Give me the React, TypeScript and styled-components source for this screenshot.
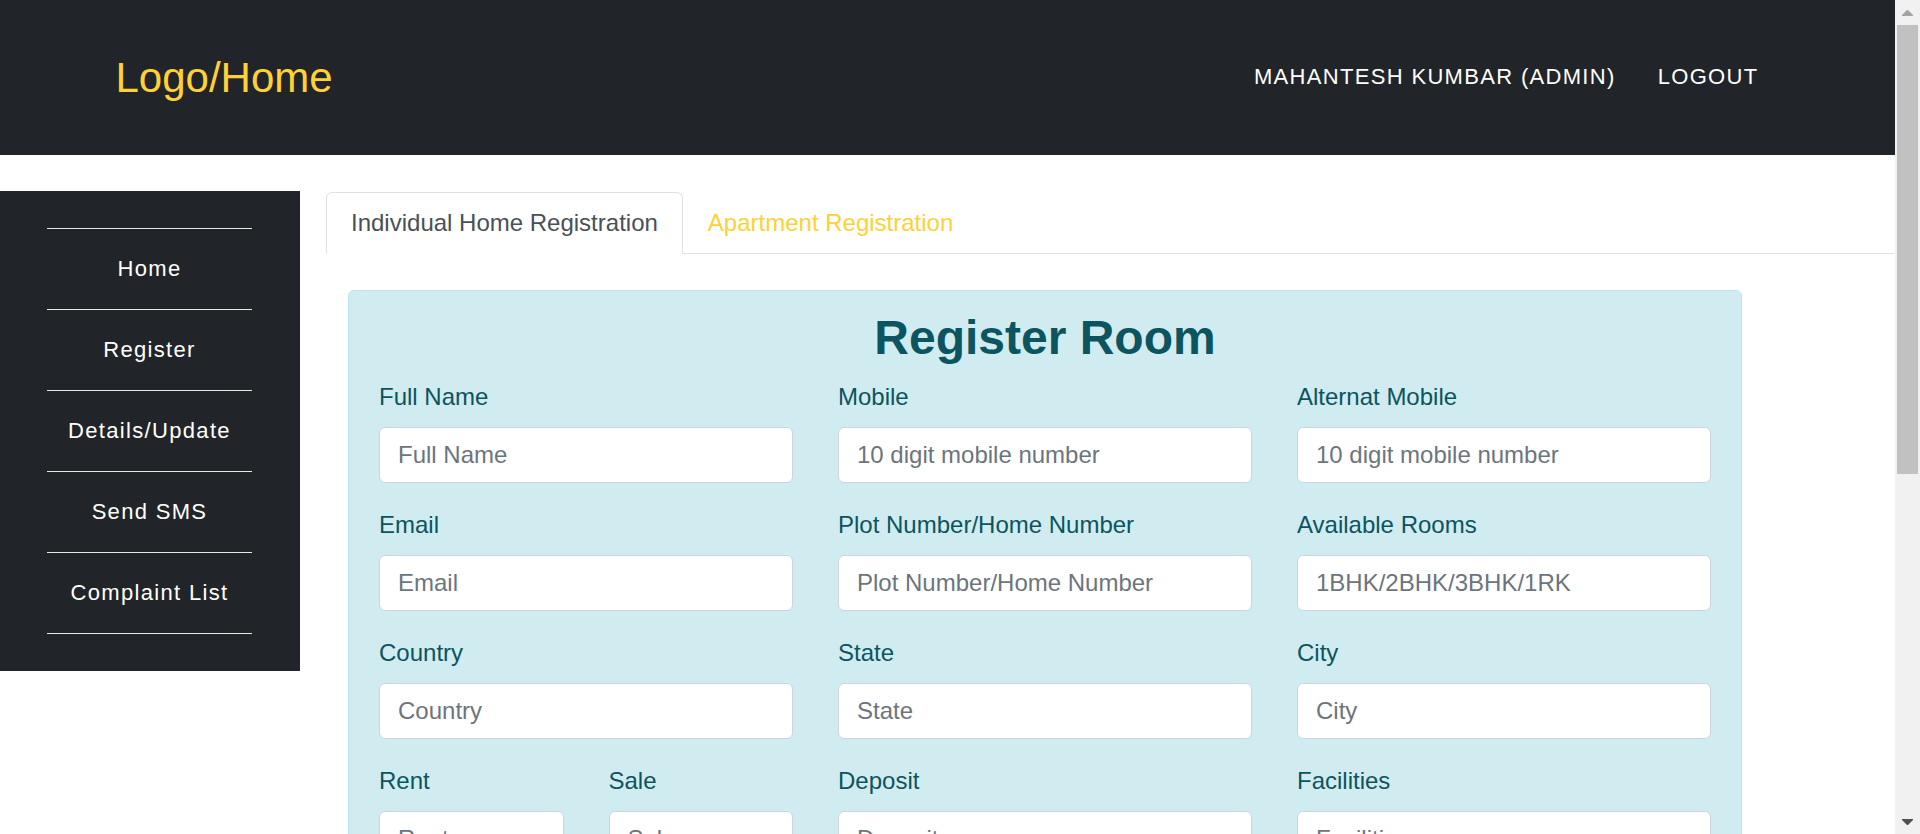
import React from "react";
import styled, { createGlobalStyle, css } from "styled-components";

const GlobalStyle = createGlobalStyle`
  *, *::before, *::after { box-sizing: border-box; }
  body {
    margin: 0;
    background: #fff;
    color: #212529;
    font-family: "Liberation Sans", Arial, sans-serif;
    font-size: 24px;
    line-height: 36px;
  }
`;

const Viewport = styled.div`
  display: flex;
  height: 100vh;
  overflow: hidden;
`;

const Page = styled.div`
  flex: 1;
  min-width: 0;
  overflow: hidden;
`;

const Header = styled.header`
  background: #212529;
`;

const HeaderInner = styled.div`
  display: flex;
  align-items: center;
  justify-content: space-between;
  max-width: 1710px;
  min-height: 155px;
  margin: 0 auto;
  padding: 0 23px;
`;

const Brand = styled.a`
  color: #fed136;
  font-size: 42px;
  line-height: 64px;
  text-decoration: none;
`;

const HeaderNav = styled.nav`
  display: flex;
  padding-bottom: 2px;
`;

const navText = css`
  color: #fff;
  font-size: 22px;
  letter-spacing: 0.06em;
  text-decoration: none;
`;

const HeaderLink = styled.a`
  ${navText}
  padding: 0 21px;
  text-transform: uppercase;
`;

const Content = styled.div`
  display: flex;
  align-items: flex-start;
  padding-top: 36px;
`;

const Sidebar = styled.nav`
  flex: 0 0 300px;
  padding: 37px 48px 37px 47px;
  background: #212529;
`;

const SideList = styled.ul`
  margin: 0;
  padding: 0;
  list-style: none;
  border-top: 1px solid #e9e9e5;
`;

const SideItem = styled.li`
  border-bottom: 1px solid #e9e9e5;
`;

const SideLink = styled.a`
  ${navText}
  display: block;
  padding: 22px 0;
  text-align: center;
  white-space: nowrap;
`;

const Main = styled.main`
  flex: 1;
  min-width: 0;
  padding: 1px 0 0 26px;
`;

const Tabs = styled.div`
  display: flex;
  border-bottom: 1px solid #dee2e6;
`;

const Tab = styled.button<{ $active?: boolean }>`
  margin: 0 0 -1px;
  padding: 12px 24px;
  border: 1px solid transparent;
  border-radius: 6px 6px 0 0;
  background: transparent;
  color: #fed136;
  font: inherit;
  cursor: pointer;
  ${({ $active }) =>
    $active &&
    css`
      border-color: #dee2e6 #dee2e6 #fff;
      background: #fff;
      color: #495057;
    `}
`;

const Panel = styled.form`
  margin: 36px 153px 36px 22px;
  padding: 18px 30px;
  border: 1px solid #bee5eb;
  border-radius: 6px;
  background: #d1ecf1;
  color: #0c5460;
`;

const Title = styled.h1`
  margin: 0 0 12px;
  font-size: 48px;
  font-weight: 700;
  line-height: 58px;
  text-align: center;
`;

const Fields = styled.div`
  display: grid;
  grid-template-columns: repeat(6, minmax(0, 1fr));
  gap: 24px 45px;
`;

const Field = styled.div<{ $half?: boolean }>`
  grid-column: span ${({ $half }) => ($half ? 1 : 2)};
`;

const Label = styled.label`
  display: block;
  width: fit-content;
  margin-bottom: 12px;
`;

const Input = styled.input`
  display: block;
  width: 100%;
  height: 56px;
  padding: 9px 18px;
  border: 1px solid #ced4da;
  border-radius: 6px;
  background: #fff;
  color: #495057;
  font: inherit;
  &::placeholder {
    color: #6c757d;
    opacity: 1;
  }
`;

const Scrollbar = styled.div`
  display: flex;
  flex: 0 0 25px;
  flex-direction: column;
  background: #f1f1f1;
`;

const ScrollArrow = styled.div`
  display: flex;
  flex: 0 0 25px;
  align-items: center;
  justify-content: center;
`;

const ScrollTrack = styled.div`
  flex: 1;
  padding: 0 2px;
`;

const ScrollThumb = styled.div`
  height: 57.3%;
  background: #c1c1c1;
`;

const sideLinks = ["Home", "Register", "Details/Update", "Send SMS", "Complaint List"];

type FieldSpec = { id: string; label: string; placeholder?: string; type?: string; half?: boolean };

const fields: FieldSpec[] = [
  { id: "fullName", label: "Full Name" },
  { id: "mobile", label: "Mobile", placeholder: "10 digit mobile number", type: "tel" },
  { id: "altMobile", label: "Alternat Mobile", placeholder: "10 digit mobile number", type: "tel" },
  { id: "email", label: "Email", type: "email" },
  { id: "plot", label: "Plot Number/Home Number" },
  { id: "rooms", label: "Available Rooms", placeholder: "1BHK/2BHK/3BHK/1RK" },
  { id: "country", label: "Country" },
  { id: "state", label: "State" },
  { id: "city", label: "City" },
  { id: "rent", label: "Rent", half: true },
  { id: "sale", label: "Sale", half: true },
  { id: "deposit", label: "Deposit" },
  { id: "facilities", label: "Facilities" },
];

export default function App() {
  return (
    <>
      <GlobalStyle />
      <Viewport>
        <Page>
          <Header>
            <HeaderInner>
              <Brand href="#">Logo/Home</Brand>
              <HeaderNav>
                <HeaderLink href="#">Mahantesh Kumbar (Admin)</HeaderLink>
                <HeaderLink href="#">Logout</HeaderLink>
              </HeaderNav>
            </HeaderInner>
          </Header>
          <Content>
            <Sidebar>
              <SideList>
                {sideLinks.map((text) => (
                  <SideItem key={text}>
                    <SideLink href="#">{text}</SideLink>
                  </SideItem>
                ))}
              </SideList>
            </Sidebar>
            <Main>
              <Tabs role="tablist">
                <Tab type="button" role="tab" aria-selected="true" $active>
                  Individual Home Registration
                </Tab>
                <Tab type="button" role="tab" aria-selected="false">
                  Apartment Registration
                </Tab>
              </Tabs>
              <Panel>
                <Title>Register Room</Title>
                <Fields>
                  {fields.map((f) => (
                    <Field key={f.id} $half={f.half}>
                      <Label htmlFor={f.id}>{f.label}</Label>
                      <Input id={f.id} type={f.type ?? "text"} placeholder={f.placeholder ?? f.label} />
                    </Field>
                  ))}
                </Fields>
              </Panel>
            </Main>
          </Content>
        </Page>
        <Scrollbar aria-hidden="true">
          <ScrollArrow>
            <svg width="11" height="6" viewBox="0 0 11 6">
              <path d="M5 0h1l5 5v1H0V5z" fill="#a3a3a3" />
            </svg>
          </ScrollArrow>
          <ScrollTrack>
            <ScrollThumb />
          </ScrollTrack>
          <ScrollArrow>
            <svg width="11" height="6" viewBox="0 0 11 6">
              <path d="M0 0h11v1L6 6H5L0 1z" fill="#505050" />
            </svg>
          </ScrollArrow>
        </Scrollbar>
      </Viewport>
    </>
  );
}
